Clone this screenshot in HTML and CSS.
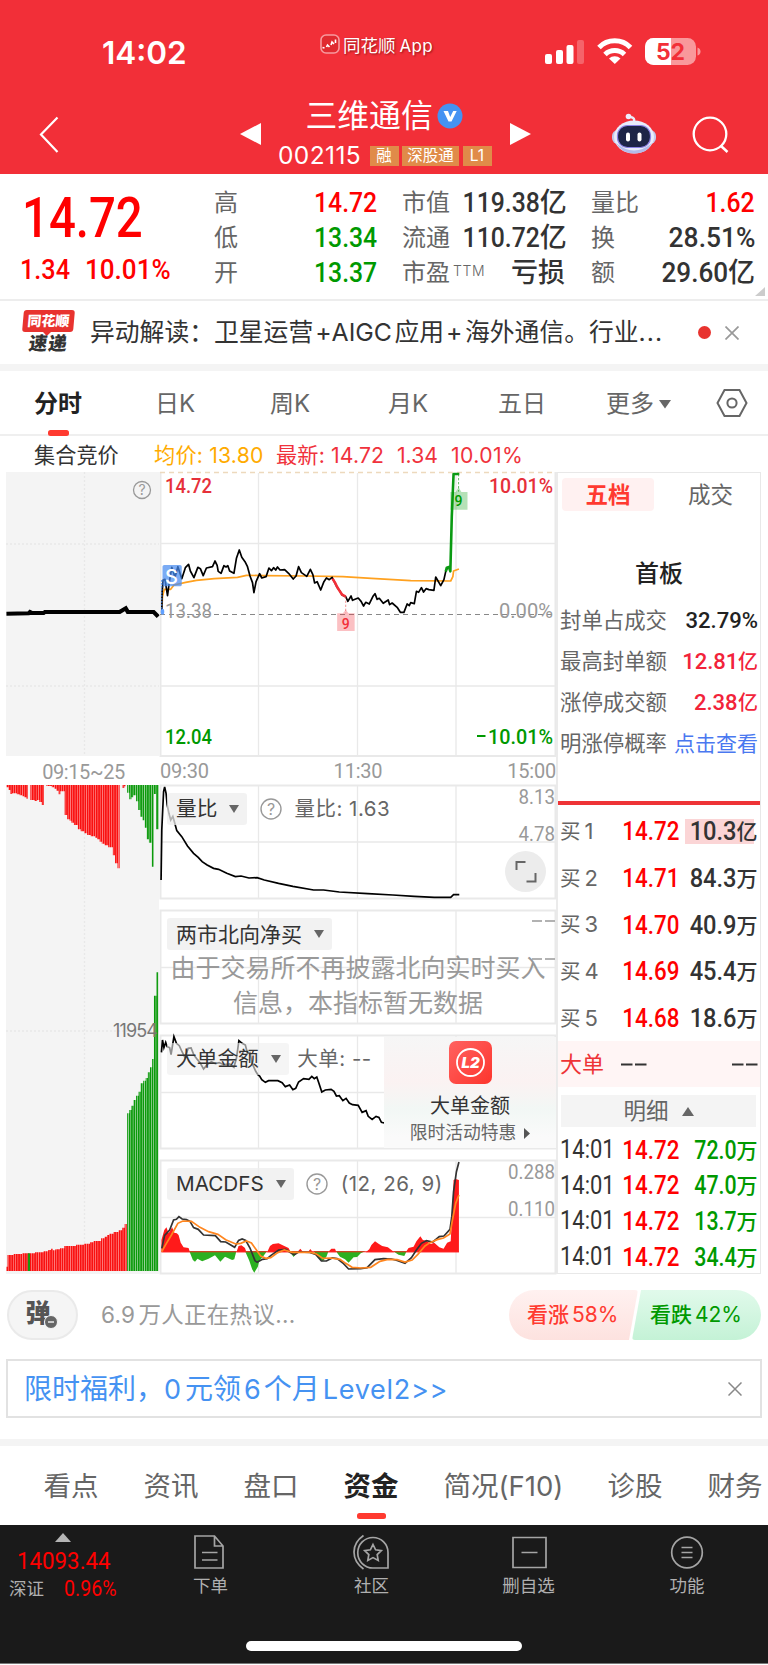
FILE: index.html
```html
<!DOCTYPE html>
<html lang="zh-CN">
<head>
<meta charset="utf-8">
<title>三维通信 002115</title>
<link rel="stylesheet" href="styles.css">
</head>
<body>
<header class="top">
  <div class="status">
    <div class="clock">14:02</div>
    <div class="app-name">
      <svg width="20" height="20" viewBox="0 0 20 20"><rect x="1" y="1" width="18" height="18" rx="5" fill="#e02a30" stroke="#f79a9e" stroke-width="1.600"/><path d="M2.500 13.500l2 .5M6.500 13l1-2 2 2M11 11l1-3 2 2M15.500 9V5.500" fill="none" stroke="#fff" stroke-width="1.600"/></svg>
      <span>同花顺<span class="app-latin">App</span></span>
    </div>
    <svg class="status-icons" width="160" height="30" viewBox="544 37 160 30">
      <g fill="#fff"><rect x="545" y="54" width="7" height="10" rx="2"/><rect x="556" y="50" width="7" height="14" rx="2"/><rect x="566.500" y="45" width="7" height="19" rx="2"/><rect x="577" y="40" width="7" height="24" rx="2" opacity=".25"/></g>
      <g fill="none" stroke="#fff" stroke-width="5"><path d="M599 47.500a22 22 0 0 1 31.500 0"/><path d="M605 54.500a14 14 0 0 1 19.500 0"/></g>
      <path d="M609 58.500a8.500 8.500 0 0 1 11.500 0L614.800 64z" fill="#fff"/>
      <rect x="645" y="38" width="51" height="27" rx="8.500" fill="#f9989b"/>
      <path d="M671 38h-17.500a8.500 8.500 0 0 0-8.500 8.500v10a8.500 8.500 0 0 0 8.500 8.500H671z" fill="#fff"/>
      <path d="M697.500 47.500q3 1 3 4t-3 4z" fill="#f9989b"/>
      <text x="656" y="60" class="batt" textLength="29">52</text>
    </svg>
  </div>
  <div class="nav">
    <svg class="nav-back" width="22" height="38" viewBox="38 116 22 38"><path d="M57.500 117.500L41 134.500l16.500 17.500" fill="none" stroke="#fff" stroke-width="2.200"/></svg>
    <svg class="nav-prev" width="21" height="22" viewBox="0 0 21 22"><path d="M21 0v22L0 11z" fill="#fff"/></svg>
    <div class="stock">
      <div class="stock-name"><span>三维通信</span><svg width="26" height="26" viewBox="0 0 26 26"><circle cx="13" cy="13" r="12.500" fill="#4592f2"/><path d="M6.500 8H11l2.200 6 3-6h3.500L14.500 18.500h-3z" fill="#fff"/></svg></div>
      <div class="stock-code"><span class="code">002115</span><span class="tag">融</span><span class="tag tag-wide">深股通</span><span class="tag">L1</span></div>
    </div>
    <svg class="nav-next" width="21" height="22" viewBox="0 0 21 22"><path d="M0 0v22l21-11z" fill="#fff"/></svg>
    <svg class="nav-bot" width="46" height="42" viewBox="611 113 46 42">
      <path d="M634 122q1-4-3-5" fill="none" stroke="#e9ebf8" stroke-width="2.400"/><circle cx="628.500" cy="116.500" r="2.800" fill="#eef"/>
      <rect x="612" y="130" width="44" height="14" rx="6" fill="#c3c9ed"/>
      <ellipse cx="634" cy="137" rx="20" ry="16.500" fill="#e9ecfb"/><path d="M616 143q18 15 36 0-5 11-18 10.500-13-.5-18-10.500" fill="#b4bbe9"/>
      <rect x="617.500" y="125.500" width="33" height="22" rx="10" fill="#1e2547" stroke="#8c82e6" stroke-width="1.200"/>
      <rect x="626" y="132.500" width="4" height="9" rx="2" fill="#fff"/><rect x="637.500" y="132.500" width="4" height="9" rx="2" fill="#fff"/>
    </svg>
    <svg class="nav-search" width="38" height="38" viewBox="692 116 38 38"><circle cx="710" cy="134" r="16.300" fill="none" stroke="#fff" stroke-width="2.300"/><path d="M720.500 145.500l7 6.500" stroke="#fff" stroke-width="2.500"/></svg>
  </div>
</header>

<section class="quote">
  <div class="last">
    <div class="last-price"><span class="n">14.72</span></div>
    <div class="last-chg"><span class="n">1.34</span><span class="n pct">10.01%</span></div>
  </div>
  <dl class="facts f1">
    <dt>高</dt><dd class="up"><span class="n">14.72</span></dd>
    <dt>低</dt><dd class="down"><span class="n">13.34</span></dd>
    <dt>开</dt><dd class="down"><span class="n">13.37</span></dd>
  </dl>
  <dl class="facts f2">
    <dt>市值</dt><dd><span class="n">119.38</span>亿</dd>
    <dt>流通</dt><dd><span class="n">110.72</span>亿</dd>
    <dt>市盈<sup>TTM</sup></dt><dd>亏损</dd>
  </dl>
  <dl class="facts f3">
    <dt>量比</dt><dd class="up"><span class="n">1.62</span></dd>
    <dt>换</dt><dd><span class="n pct">28.51%</span></dd>
    <dt>额</dt><dd><span class="n amt">29.60</span>亿</dd>
  </dl>
  <svg class="corner" width="10" height="9" viewBox="0 0 10 9"><path d="M10 0v9H0z" fill="#ccc"/></svg>
</section>

<section class="news">
  <div class="news-logo"><span class="logo-a">同花顺</span><span class="logo-b">速递</span></div>
  <div class="news-text">异动解读：卫星运营<i>+AIGC</i>应用<i>+</i>海外通信。行业<b>...</b></div>
  <span class="dot"></span>
  <svg width="14" height="14" viewBox="0 0 14 14"><path d="M.5.500l13 13M13.500.500l-13 13" stroke="#999" stroke-width="1.700"/></svg>
</section>

<nav class="periods">
  <span class="p-on">分时</span><span>日K</span><span>周K</span><span>月K</span><span>五日</span>
  <span class="more">更多<svg width="12" height="9" viewBox="0 0 12 9"><path d="M0 0h12L6 8.500z" fill="#666"/></svg></span>
  <svg class="gear" width="32" height="30" viewBox="0 0 32 30"><path d="M8.500 2h15L30.500 15l-7 13h-15L1.500 15z" fill="none" stroke="#666" stroke-width="2"/><circle cx="16" cy="15" r="4.600" fill="none" stroke="#666" stroke-width="2"/></svg>
</nav>

<div class="legend"><span class="l1">集合竞价</span><span class="l2">均价: 13.80</span><span class="l3">最新: 14.72</span><span class="l4">1.34</span><span class="l5">10.01%</span></div>

<main class="board">
  <div class="auction">
    <svg class="blk" width="154" height="285" viewBox="6 472 154 285">
      <rect x="6" y="472" width="153" height="284" fill="#f4f4f4"/>
      <path d="M84.500 472v284M6 544h153M6 686h153" stroke="#e8e8e8" stroke-width="1.300" stroke-dasharray="2 2"/>
      <g transform="translate(0 470) scale(.35714 .33333)"><path d="M18 431L80 430 84 426 90 429H122L126 426H335L352 415 358 426H430L443 440" fill="none" stroke="#000" stroke-width="12"/></g>
      <circle cx="142" cy="490" r="8.500" fill="none" stroke="#999" stroke-width="1.300"/><text x="142" y="495" class="q">?</text>
    </svg>
    <div class="auction-time">09:15~25</div>
    <svg class="blk" width="154" height="489" viewBox="6 785 154 489">
      <defs>
        <pattern id="r" width="6.400" height="10" patternUnits="userSpaceOnUse"><rect width="6.400" height="10" fill="#f99"/><rect width="4.700" height="10" fill="#f91010"/></pattern>
        <pattern id="g" width="6.400" height="10" patternUnits="userSpaceOnUse" x="2.500"><rect width="6.400" height="10" fill="#aed8ae"/><rect width="4.500" height="10" fill="#0a9a0a"/></pattern>
      </defs>
      <rect x="6" y="785" width="153" height="489" fill="#f4f4f4"/>
      <path d="M84.500 785v488M6 1031h153" stroke="#e8e8e8" stroke-width="1.300" stroke-dasharray="2 2"/>
      <g transform="translate(0 770) scale(.35714 .33333)">
        <path fill="url(#r)" d="M18 45V52H24V60H29V72H34V70H47V73H55V76H62V79H68V82H74V86H78V45zM85 45V90H97V93H104V90H110V96H117V105H123V45zM130 45V48H145V52H152V56H158V62H164V73H169V64H181V135H188V148H195V152H200V158H207V165H218V178H226V184H236V190H244V195H254V199H266V203H272V208H279V215H285V221H293V226H303V232H316V256H322V280H329V295H335V45zM343 45V54H348V49H352V45z"/>
        <path fill="url(#g)" d="M356 45V68H362V88H368V82H373V76H381V94H387V120H393V140H399V151H405V173H411V208H417V218H425V290H431V72H437V178H444V45z"/>
      </g>
      <g transform="translate(0 1020) scale(.35714 .33333)">
        <path fill="url(#r)" d="M17 753V740H21V705H38V702H62V700H98V697H122V694H135V690H143V686H148V691H155V688H168V685H180V678H213V674H235V671H252V667H262V663H283V655H293V650H300V645H306V641H318V636H332V631H342V623H349V612H355V753z"/>
        <rect x="78" y="700" width="6" height="53" fill="#1a9a10"/>
        <path fill="url(#g)" d="M356 753V280H362V270H368V257H374V240H381V227H388V215H394V190H401V182H408V174H414V157H420V142H426V117H431V-73H438V-143H443V753z"/>
      </g>
      <text x="113" y="1037" class="vol" textLength="45">11954</text>
    </svg>
  </div>

  <div class="plots">
    <svg class="blk" width="398" height="286" viewBox="160 471 398 286">
      <g class="grid"><path d="M258.500 473v283M357.500 473v283M456 473v283M160 543.500h396M160 686h396"/><path class="edge" d="M160.500 472v284H555.500V472"/></g>
      <path d="M160 472.500h396" stroke="#edd9bd" stroke-width="1.600" stroke-dasharray="5 4"/>
      <path d="M160 614.500h396" stroke="#888" stroke-width="1.100" stroke-dasharray="5 4"/>
      <text x="165" y="493" class="ax up2" textLength="47" lengthAdjust="spacingAndGlyphs">14.72</text>
      <text x="489" y="493" class="ax up2" textLength="64" lengthAdjust="spacingAndGlyphs">10.01%</text>
      <text x="165" y="618" class="ax mute" textLength="47" lengthAdjust="spacingAndGlyphs">13.38</text>
      <text x="499" y="618" class="ax mute" textLength="54" lengthAdjust="spacingAndGlyphs">0.00%</text>
      <text x="165" y="743.500" class="ax down" textLength="47" lengthAdjust="spacingAndGlyphs">12.04</text>
      <path d="M477 736h8.500" stroke="#090" stroke-width="2"/>
      <text x="488" y="743.500" class="ax down" textLength="65" lengthAdjust="spacingAndGlyphs">10.01%</text>
      <g transform="translate(0 470) scale(.35714 .33333)" fill="none" stroke-linejoin="round">
        <path class="ln" stroke="#ffa11f" d="M453 425L455 380 460 358 478 358 487 345 520 337 550 331 600 326 665 322 690 316 740 317 860 318 960 320 1040 325 1150 332 1262 333 1268 320 1270 303 1285 297"/>
        <path class="ln" stroke="#000" d="M453 430L454 365 457 330 462 328 469 377 475 330 481 292 490 322 498 290 509 326 519 293 528 283 533 303 543 323 554 292 561 296 569 317 578 294 595 290 602 273 608 286 611 304 619 310 627 287 633 291 638 287 643 303 655 310 662 265 670 240 677 262 686 275 693 290 700 318 707 338 711 368 717 335 727 311 733 324 745 320 753 294 760 302 766 293 772 300 777 291 784 300 797 299 808 310 821 327 829 318 836 290 844 308 859 319 869 298 876 314 881 339 888 335 898 360 907 335 914 324 922 329 930 322 937 337 944 352 951 362 958 375 968 380 974 394 983 378 987 391 1003 384 1011 394 1018 408 1024 397 1034 402 1045 378 1050 371 1056 388 1062 385 1073 400 1087 390 1091 404 1098 399 1112 412 1121 427 1131 427 1140 402 1146 407 1150 398 1160 401 1166 364 1172 367 1180 353 1186 366 1193 356 1201 359 1215 361 1220 321 1234 347 1243 329 1248 305 1253 292"/>
        <path class="ln2" stroke="#f22f38" d="M931 326L938 338 944 351 950 361 958 374 968 380"/>
        <path class="ln2" stroke="#0a9a12" d="M1248 305L1251 293 1257 291 1261 304 1265 140 1270 12 1286 12"/>
        <path d="M968 380V430" stroke="#e66" stroke-width="2" stroke-dasharray="7 5"/><path d="M1284 12V65" stroke="#299a29" stroke-width="2" stroke-dasharray="7 5"/>
        <path fill="#f22f38" fill-opacity=".3" d="M947 430H960L968 419 976 430H993V483H944V430z"/>
        <path fill="#0a9a12" fill-opacity=".3" d="M1261 66H1276L1284 52 1292 66H1309V119H1261z"/>
        <rect x="455" y="285" width="54" height="64" rx="5" fill="#468bf0" fill-opacity=".72"/>
        <path d="M453 330V425" stroke="#468bf0" stroke-width="3" stroke-dasharray="5 4"/><ellipse cx="455" cy="425" rx="5" ry="9" fill="#60a0ff"/>
      </g>
      <text x="171.500" y="583.500" class="s-mark">S</text>
      <text x="345.700" y="628.500" class="nine" fill="#f22f38">9</text><text x="458.500" y="506" class="nine" fill="#090">9</text>
    </svg>
    <div class="times"><span>09:30</span><span>11:30</span><span>15:00</span></div>

    <div class="panel">
      <svg class="blk" width="398" height="115" viewBox="160 785 398 115">
        <g class="grid"><path d="M258.500 786v113M357.500 786v113M456 786v113M160 842h396"/><path class="edge" d="M160.500 785.500H555.500V898.500H160.500z"/></g>
        <g transform="translate(0 770) scale(.35714 .33333)"><path class="ln" fill="none" stroke="#000" d="M451 330L453 180 458 65 461 51 465 70 468 104 473 130 478 150 484 139 489 158 495 182 509 200 525 228 542 250 555 262 566 275 580 285 598 295 612 298 635 310 659 320 675 318 697 324 720 323 740 330 780 340 820 349 878 360 906 360 950 366 1030 371 1100 375 1160 379 1216 382H1262L1270 374H1286"/></g>
        <text x="518.500" y="803.500" class="ax mute" textLength="36.500" lengthAdjust="spacingAndGlyphs">8.13</text>
        <text x="518.500" y="840.500" class="ax mute" textLength="36.500" lengthAdjust="spacingAndGlyphs">4.78</text>
        <circle cx="525.500" cy="871.500" r="20.500" fill="#ececec"/><path d="M516.500 870v-8h9M526.500 881.500h9v-8.500" fill="none" stroke="#666" stroke-width="2"/>
      </svg>
      <div class="over"><span class="chip">量比<i class="tri"></i></span><svg class="help" width="22" height="22" viewBox="0 0 22 22"><circle cx="11" cy="11" r="10" fill="none" stroke="#999" stroke-width="1.400"/><text x="11" y="17" class="q big">?</text></svg><span class="reading val">量比: 1.63</span></div>
    </div>

    <div class="panel">
      <svg class="blk" width="398" height="115" viewBox="160 910 398 115">
        <g class="grid"><path d="M258.500 911v113M357.500 911v113M456 911v113M160 967.500h396"/><path class="edge" d="M160.500 910.500H555.500V1023.500H160.500z"/></g>
        <path d="M532 921h10M545 921h10M532 959h10M545 959h10" stroke="#999" stroke-width="1.700"/>
      </svg>
      <div class="over"><span class="chip wide">两市北向净买<i class="tri"></i></span></div>
      <p class="notice">由于交易所不再披露北向实时买入<br>信息，本指标暂无数据</p>
    </div>

    <div class="panel">
      <svg class="blk" width="398" height="115" viewBox="160 1035 398 115">
        <g class="grid"><path d="M258.500 1036v113M357.500 1036v113M456 1036v113M160 1092.500h396"/><path class="edge" d="M160.500 1035.500H555.500V1148.500H160.500z"/></g>
        <g transform="translate(0 1020) scale(.35714 .33333)"><path class="ln" fill="none" stroke="#000" d="M452 97L455 60 459 83 464 67 468 80 475 83 479 104 487 50 494 70 502 77 510 96 518 113 527 85 535 84 543 105 553 119 560 128 570 147 580 134 592 125 603 131 614 128 627 134 643 132 655 142 662 115 669 62 678 70 687 75 693 100 700 98 706 130 716 154 722 164 727 168 733 179 743 187 752 182H778L790 188 799 200 811 195 820 209 828 205 836 186 850 176 865 178 873 169 880 176 887 171 893 190 901 216 911 210 927 208 935 214 942 228 950 227 960 242 969 235 978 249 987 254 1003 256 1014 277 1025 272 1031 289 1042 298 1053 289 1061 292 1068 307 1076 309"/></g>
      </svg>
      <div class="over"><span class="chip see">大单金额<i class="tri"></i></span><span class="reading tight">大单: --</span></div>
      <div class="promo">
        <svg width="43" height="43" viewBox="0 0 43 43"><defs><linearGradient id="pg" x2="1" y2="1"><stop stop-color="#ff6260"/><stop offset="1" stop-color="#fd352d"/></linearGradient></defs><rect width="43" height="43" rx="7" fill="url(#pg)"/><circle cx="21.500" cy="21.500" r="13.500" fill="none" stroke="#fff" stroke-width="1.800"/><text x="21.500" y="27" class="l2t">L2</text></svg>
        <div class="promo-t">大单金额</div>
        <div class="promo-s">限时活动特惠<svg width="6" height="11" viewBox="0 0 6 11"><path d="M0 0l6 5.500L0 11z" fill="#555"/></svg></div>
      </div>
    </div>

    <div class="panel last-panel">
      <svg class="blk" width="398" height="114" viewBox="160 1160 398 114">
        <g class="grid"><path d="M258.500 1161v113M357.500 1161v113M456 1161v113M160 1217.500h396"/><path class="edge" d="M160.500 1160.500H555.500V1273.500H160.500z"/></g>
        <text x="508" y="1178.500" class="ax mute" textLength="47" lengthAdjust="spacingAndGlyphs">0.288</text>
        <text x="508" y="1216" class="ax mute" textLength="47" lengthAdjust="spacingAndGlyphs">0.110</text>
        <g transform="translate(0 1020) scale(.35714 .33333)">
          <path fill="#ff1a1a" d="M452 697V660L460 630 466 622 472 640 482 622 488 638 495 640 500 645 506 668 514 682 528 684 532 697zM662 697L668 678 676 676 686 684 690 697zM748 697L756 678 764 672 780 670 796 678 808 684 814 697zM832 697L841 686 849 697zM862 697L869 687 876 697zM918 697L928 686 938 686 942 697zM1024 697L1034 688 1040 675 1050 664 1060 671 1070 678 1086 682 1104 697zM1136 697L1144 684 1158 680 1166 664 1177 649 1184 660 1194 662 1206 672 1216 668 1230 682 1242 686 1252 668 1262 664 1267 560 1270 480 1276 477 1285 480V697z"/>
          <path fill="#2bb020" d="M530 693L540 720 546 725 553 716 566 724 584 716 602 706 617 725 630 710 650 720 656 718 662 693zM686 693L698 722 706 748 712 758 722 740 726 722 735 712 748 693zM810 693L822 711 834 693zM878 693L890 712 904 724 914 710 920 693zM940 693L952 710 966 718 976 728 990 712 1000 711 1010 700 1024 693zM1100 693L1116 704 1132 708 1139 693z"/>
          <path d="M452 695H1285" stroke="#f22" stroke-width="3"/>
          <path class="ln" fill="none" stroke="#333" d="M453 685L461 646 475 630 486 600 494 598 501 590 510 597 522 599 532 604 542 623 555 628 570 645 603 647 618 665 632 666 657 682 668 661 678 657 688 661 700 684 714 722 720 727 735 718 748 716 758 707 780 690 800 688 814 698 824 704 836 696 868 697 884 703 900 723 914 723 930 714 944 716 960 729 976 747 1010 746 1028 743 1050 719 1074 716 1096 717 1112 721 1134 730 1152 713 1166 690 1180 670 1194 662 1212 666 1230 650 1243 648 1260 628 1265 590 1270 515 1278 455 1285 426"/>
          <path class="ln" fill="none" stroke="#ff861f" d="M453 695L466 670 480 645 498 610 512 603 536 604 560 622 584 635 610 643 632 659 660 672 674 670 690 663 704 669 716 687 730 708 744 715 758 713 776 699 796 690 818 697 870 697 886 702 904 715 926 714 952 718 968 730 986 742 1012 744 1038 742 1064 724 1086 718 1112 719 1134 726 1154 720 1170 703 1190 678 1204 668 1224 659 1242 654 1260 642 1266 605 1276 550 1285 525"/>
        </g>
      </svg>
      <div class="over"><span class="chip">MACDFS<i class="tri"></i></span><svg class="help" width="22" height="22" viewBox="0 0 22 22"><circle cx="11" cy="11" r="10" fill="none" stroke="#999" stroke-width="1.400"/><text x="11" y="17" class="q big">?</text></svg><span class="reading params">(12, 26, 9)</span></div>
    </div>
  </div>

  <aside class="book">
    <div class="book-tabs"><span class="bt-on">五档</span><span>成交</span></div>
    <h2>首板</h2>
    <div class="kv"><span>封单占成交</span><b><span class="n">32.79%</span></b></div>
    <div class="kv"><span>最高封单额</span><b class="rd"><span class="n">12.81</span>亿</b></div>
    <div class="kv"><span>涨停成交额</span><b class="rd"><span class="n">2.38</span>亿</b></div>
    <div class="kv"><span>明涨停概率</span><a>点击查看</a></div>
    <div class="rule"></div>
    <div class="bid"><span>买<i>1</i></span><b class="up"><span class="n">14.72</span></b><b class="hl"><span class="n">10.3</span>亿</b></div>
    <div class="bid"><span>买<i>2</i></span><b class="up"><span class="n">14.71</span></b><b><span class="n">84.3</span>万</b></div>
    <div class="bid"><span>买<i>3</i></span><b class="up"><span class="n">14.70</span></b><b><span class="n">40.9</span>万</b></div>
    <div class="bid"><span>买<i>4</i></span><b class="up"><span class="n">14.69</span></b><b><span class="n">45.4</span>万</b></div>
    <div class="bid"><span>买<i>5</i></span><b class="up"><span class="n">14.68</span></b><b><span class="n">18.6</span>万</b></div>
    <div class="big-order"><span>大单</span><svg width="26" height="3" viewBox="0 0 26 3"><path d="M0 1.500h11.500M14 1.500h11.500" stroke="#333" stroke-width="2"/></svg><svg width="26" height="3" viewBox="0 0 26 3"><path d="M0 1.500h11.500M14 1.500h11.500" stroke="#333" stroke-width="2"/></svg></div>
    <div class="detail">明细<svg width="12" height="9" viewBox="0 0 12 9"><path d="M0 9h12L6 0z" fill="#666"/></svg></div>
    <div class="tick"><span class="n">14:01</span><b class="up"><span class="n">14.72</span></b><b class="down"><span class="n">72.0</span>万</b></div>
    <div class="tick"><span class="n">14:01</span><b class="up"><span class="n">14.72</span></b><b class="down"><span class="n">47.0</span>万</b></div>
    <div class="tick"><span class="n">14:01</span><b class="up"><span class="n">14.72</span></b><b class="down"><span class="n">13.7</span>万</b></div>
    <div class="tick"><span class="n">14:01</span><b class="up"><span class="n">14.72</span></b><b class="down"><span class="n">34.4</span>万</b></div>
  </aside>
</main>

<section class="talk">
  <div class="danmu"><span>弹</span><svg width="14" height="14" viewBox="0 0 14 14"><circle cx="7" cy="7" r="6.500" fill="#666" stroke="#f5f5f5"/><path d="M4 7h6" stroke="#fff" stroke-width="1.300"/></svg></div>
  <div class="talk-text"><i>6.9</i>万人正在热议...</div>
  <div class="vote"><span class="bull">看涨<i>58%</i></span><span class="bear">看跌<i>42%</i></span></div>
</section>

<section class="promo-bar"><span>限时福利，<i class="zero">0</i>元领<i>6</i>个月<i class="lv">Level2&gt;&gt;</i></span><svg width="14" height="14" viewBox="0 0 14 14"><path d="M.5.500l13 13M13.500.500l-13 13" stroke="#888" stroke-width="1.500"/></svg></section>

<nav class="sections"><span>看点</span><span>资讯</span><span>盘口</span><span class="s-on">资金</span><span>简况<i>(F10)</i></span><span>诊股</span><span>财务</span></nav>

<footer class="bar">
  <div class="index">
    <svg width="16" height="9" viewBox="0 0 16 9"><path d="M0 9h16L8 0z" fill="#b5b5b5"/></svg>
    <div class="ix-v"><span class="n">14093.44</span></div>
    <div class="ix-r"><span>深证</span><span class="n">0.96%</span></div>
  </div>
  <div class="act a1"><svg width="36" height="36" viewBox="0 0 36 36"><path d="M2 2h19.500L30 12v22H2zM21.500 2v10H30M9 18.500h15.500M9 26h15.500"/></svg><span>下单</span></div>
  <div class="act a2"><svg width="38" height="36" viewBox="0 0 38 36"><path d="M20 3.500A15 15 0 0 0 20 34h15V18.500A15 15 0 0 0 20 3.500zM10.500 1.500Q1 8 1 18t9.500 17"/><path d="M20 10.500l2.600 5.300 5.700.8-4.100 4 1 5.800-5.200-2.800-5.200 2.800 1-5.800-4.100-4 5.700-.8z"/></svg><span>社区</span></div>
  <div class="act a3"><svg width="36" height="36" viewBox="0 0 36 36"><path d="M2 3.500h33v30h-33zM10.500 18.500h16"/></svg><span>删自选</span></div>
  <div class="act a4"><svg width="34" height="36" viewBox="0 0 34 36"><circle cx="17" cy="18.500" r="15.300"/><path d="M11.500 13.500h11M11.500 18.500h11M11.500 23.500h11"/></svg><span>功能</span></div>
  <div class="home"></div>
</footer>
</body>
</html>
```
FILE: styles.css
```css
* { box-sizing: border-box; }
html, body { margin: 0; padding: 0; }
body { width: 768px; height: 1665px; overflow: hidden; background: #fff; color: #333; font-family: Inter, "Noto Sans CJK SC", sans-serif; line-height: 1; }
i { font-style: normal; }
b { font-weight: 500; }
svg { display: block; flex: none; }
.blk { overflow: visible; }
span, div, dt, dd { white-space: nowrap; }
.n { display: inline-block; font-family: Roboto, sans-serif; font-weight: 500; transform: scaleX(.86); transform-origin: 100% 50%; }
.up { color: #f00; }
.down { color: #090; fill: #090; }

.top { height: 174px; background: #f22f38; color: #fff; display: flex; flex-direction: column; }
.status { height: 96px; display: grid; grid-template-columns: 102px 218px 224px 1fr; }
.clock { grid-column: 2; padding-top: 37px; font-size: 31.500px; line-height: 32px; font-weight: 600; }
.app-name { display: flex; gap: 3px; padding-top: 33px; height: 55px; align-items: center; font-size: 17.500px; text-shadow: 1px 1px 2px rgba(90,0,0,.6); }
.app-name > span { padding-top: 3px; }
.app-latin { margin-left: 4px; font-size: 17px; letter-spacing: .3px; }
.status-icons { margin-top: 37px; }
.batt { font: 700 23px Inter, sans-serif; fill: #f22f38; }
.nav { height: 78px; display: flex; align-items: flex-start; }
.nav-back { margin: 20px 0 0 38px; }
.nav-prev { margin: 27px 0 0 180px; }
.stock { width: 249px; padding-left: 17px; }
.stock-name { height: 40px; display: flex; align-items: center; gap: 4px; padding-left: 27.500px; font-size: 31.800px; }
.stock-code { display: flex; gap: 3.500px; align-items: center; height: 20px; margin-top: 10px; }
.code { font-size: 24.500px; width: 88px; font-weight: 400; letter-spacing: .4px; margin-top: -1px; }
.tag { width: 29px; height: 20px; background: #e08b49; font-size: 15.500px; line-height: 19px; text-align: center; }
.tag-wide { width: 57px; }
.nav-next { margin-top: 27px; }
.nav-bot { margin: 17px 0 0 80px; }
.nav-search { margin: 20px 0 0 35px; }

.quote { height: 127px; border-bottom: 2px solid #ededed; display: flex; position: relative; padding-top: 11px; }
.last { width: 214px; padding-left: 22px; color: #f00; }
.last-price { height: 65px; line-height: 65px; font-size: 55px; }
.last-price .n, .last-chg .n { transform-origin: 0 50%; }
.last-chg { font-size: 28px; line-height: 39px; display: flex; margin-left: -2px; }
.last-chg .n { width: 65px; transform: scaleX(.9); }
.last-chg .pct { transform: scaleX(.93); }
.facts { margin: 0; display: grid; grid-template-rows: 35px 35px 35px; line-height: 35px; font-size: 24px; color: #666; }
.facts dd { margin: 0; text-align: right; color: #333; font-size: 27px; font-weight: 500; }
.facts .n { transform: scaleX(.9); font-size: 27.500px; }
.facts .pct { transform: scaleX(.96); }
.facts .amt { transform: scaleX(.95); }
.facts dd.up { color: #f00; }
.facts dd.down { color: #090; }
.f1 { width: 163px; grid-template-columns: 50px 1fr; }
.f2 { width: 162px; margin-left: 25px; grid-template-columns: 52px 111px; }
.f3 { width: 164px; margin-left: 27px; grid-template-columns: 50px 1fr; }
.facts sup { font-size: 14px; vertical-align: 5px; line-height: 1; margin-left: 3px; letter-spacing: .6px; font-weight: 300; }
.corner { position: absolute; right: 3px; bottom: 3px; }

.news { height: 70px; border-bottom: 7px solid #f4f4f4; display: flex; align-items: center; padding-left: 22px; }
.news-logo { width: 53px; height: 44px; display: flex; flex-direction: column; align-items: center; margin-top: -2px; }
.logo-a { position: relative; width: 51px; height: 23px; border-radius: 3px; background: #e8332f; color: #fff; font-size: 14px; font-weight: 900; line-height: 22px; text-align: center; transform: skewX(-5deg); }
.logo-a::after { content: ""; position: absolute; left: 21px; top: 22px; border: 4px solid transparent; border-top-color: #e8332f; border-bottom: 0; }
.logo-b { font-size: 18.500px; font-weight: 900; line-height: 23px; transform: skewX(-8deg); letter-spacing: 1px; }
.news-text { margin-left: 15px; width: 608px; font-size: 24.800px; }
.news-text i { margin: 0 2.500px 0 2px; }
.news-text b { letter-spacing: 1px; font-weight: 400; }
.dot { width: 13px; height: 13px; border-radius: 50%; background: #e8332f; margin-right: 14px; }

.periods { height: 65px; border-bottom: 2px solid #efefef; display: grid; grid-template-columns: 121px 115px 118px 110px 108px 110px 1fr; padding-left: 34px; line-height: 66px; font-size: 24px; color: #666; }
.p-on { color: #222; font-weight: 700; position: relative; }
.p-on::after { content: ""; position: absolute; left: 14px; top: 59px; width: 21px; height: 6px; border-radius: 2.500px; background: #ff3a30; }
.more { display: flex; align-items: center; gap: 5px; }
.gear { margin-top: 17px; }

.legend { height: 35px; display: grid; grid-template-columns: 120px 122px 121px 54px 1fr; padding-left: 34px; font-size: 21.200px; line-height: 39px; color: #f0323c; }
.l1 { color: #333; }
.l2 { color: #ffab00; letter-spacing: .2px; }
.l3 { letter-spacing: .15px; }
.l5 { letter-spacing: .4px; }

.board { height: 803px; display: grid; grid-template-columns: 154px 398px 202px; padding-left: 6px; }
.auction, .plots { display: flex; flex-direction: column; }
.auction { padding-top: 1px; }
.auction-time { height: 28px; padding-left: 1px; text-align: center; font: 20px/30px Roboto, sans-serif; letter-spacing: -.4px; color: #999; }
.q { font: 14px Inter, sans-serif; fill: #999; text-anchor: middle; }
.q.big { font-size: 16px; }
.vol { font: 18px Inter, sans-serif; fill: #777; }
.grid path { fill: none; stroke: #e9e9e9; stroke-width: 1.300; }
.grid .edge { stroke-width: 2; }
.ax { font: 500 21px Roboto, sans-serif; }
.up2 { fill: #e6303a; }
.mute { fill: #999; font-weight: 400; }
.ln { vector-effect: non-scaling-stroke; stroke-width: 1.700; }
.ln2 { vector-effect: non-scaling-stroke; stroke-width: 2.600; }
.s-mark { font: 500 20px Inter, sans-serif; fill: #fff; text-anchor: middle; }
.nine { font: 500 14px Roboto, sans-serif; text-anchor: middle; }
.times { height: 28px; display: flex; justify-content: space-between; padding: 0 2px 0 0; font: 20px/28px Roboto, sans-serif; letter-spacing: -.2px; color: #999; }
.panel { position: relative; height: 125px; }
.last-panel { height: 114px; }
.over { position: absolute; left: 7px; top: 8px; height: 32px; display: flex; align-items: center; color: #666; font-size: 20.500px; }
.chip { height: 32px; padding: 0 8px 0 9px; border-radius: 3px; background: rgba(238,238,238,.75); color: #333; display: flex; align-items: center; font-size: 20.700px; }
.chip.wide { font-size: 21px; }
.chip.see { background: rgba(238,238,238,.6); }
.tri { border: 5.500px solid transparent; border-top: 8px solid #666; border-bottom: 0; margin-left: 12px; }
.help { margin: 0 12.500px; }
.reading.tight { margin-left: 8.500px; letter-spacing: .5px; }
.reading.val { letter-spacing: .5px; }
.params { letter-spacing: .5px; }
.notice { position: absolute; left: 0; top: 41px; width: 396px; margin: 0; text-align: center; font-size: 25px; line-height: 35px; color: #999; }
.promo { position: absolute; left: 224px; top: 2px; width: 172px; height: 111px; background: linear-gradient(#f6f6f6 0, #fbf2f2 40%, #f2f7f5 65%, #fafafa 90%); display: flex; flex-direction: column; align-items: center; padding-top: 4px; }
.l2t { font: italic 900 15px Inter, sans-serif; fill: #fff; text-anchor: middle; }
.promo-t { font-size: 20px; line-height: 26px; margin-top: 9px; color: #333; }
.promo-s { display: flex; gap: 8px; align-items: center; font-size: 17.800px; line-height: 26px; margin-top: 1px; color: #666; }

.book { border: 1px solid #e8e8e8; border-left: 2px solid #ebebeb; margin: 1px 0 0 -2px; height: 802px; width: 205px; display: flex; flex-direction: column; }
.book-tabs { display: grid; grid-template-columns: 92px 1fr; margin: 5px 3px 0 4px; line-height: 33px; height: 33px; flex: none; font-size: 22.500px; text-align: center; color: #666; }
.bt-on { background: #fff1f1; color: #ff3a30; font-weight: 700; border-radius: 4px; }
.book-tabs span + span { padding-left: 10px; }
.book h2 { margin: 47px 0 10px; text-align: center; font-size: 24px; line-height: 32px; font-weight: 500; color: #222; }
.kv { height: 41px; flex: none; display: flex; justify-content: space-between; align-items: center; padding: 0 2px; font-size: 21.400px; color: #666; }
.kv b { color: #222; font-size: 20px; }
.kv .n { font-size: 22.500px; transform: scaleX(.98); }
.kv b.rd { color: #f2233a; }
.kv a { color: #4a78f0; font-size: 21px; }
.rule { height: 4px; flex: none; background: #ee3336; margin-top: 36.500px; margin-bottom: 3.500px; }
.bid { height: 46.700px; flex: none; display: grid; grid-template-columns: 53px 60px 1fr; align-items: center; padding: 0 2.500px 0 2px; font-size: 20.500px; color: #666; }
.bid span i { margin-left: 4px; font-size: 22px; }
.bid b, .tick b { text-align: right; color: #333; font-size: 21px; }
.bid b.up, .tick b.up { color: #f00; }
.tick b.down { color: #090; }
.bid .n, .tick .n { font-size: 26px; line-height: 1; vertical-align: -1px; }
.bid b:last-child .n { transform: scaleX(.91); }
.tick b:last-child .n { transform: scaleX(.82); }
.bid b.hl { background: linear-gradient(#fbd5d6, #fbd5d6) 12px 50% / 69px 25px no-repeat; }
.big-order { height: 46px; flex: none; background: #fff5f5; display: grid; grid-template-columns: 61px 1fr 26px; align-items: center; padding: 0 2.500px 0 2px; font-size: 22px; color: #ee3336; }
.detail { height: 32px; flex: none; margin: 8px 4px 4.500px 3px; background: #f4f4f4; display: flex; align-items: center; justify-content: center; gap: 13px; font-size: 22.500px; color: #666; }
.tick { height: 35.700px; flex: none; display: grid; grid-template-columns: 53px 60px 1fr; align-items: center; padding: 0 2.500px 0 2px; }
.tick > .n { transform-origin: 0 50%; font-weight: 450; font-size: 25.500px; }

.talk { height: 82px; display: flex; align-items: center; padding: 0 7px; }
.danmu { width: 71px; height: 50px; border-radius: 25px; border: 2px solid #eaeaea; background: #f5f5f5; display: flex; align-items: center; justify-content: center; font-size: 25px; font-weight: 900; color: #555; }
.danmu > span { margin: -3px 0 0 -2px; }
.danmu svg { margin: 14px 0 0 -7px; }
.talk-text { margin-left: 23px; width: 408px; font-size: 22.500px; color: #999; letter-spacing: .3px; }
.talk-text i { margin-right: 3px; }
.vote { display: flex; width: 252px; font-size: 21px; line-height: 50px; font-weight: 500; }
.vote i { margin-left: 3px; font-size: 21px; font-weight: 400; }
.bull { width: 129px; padding-left: 18px; color: #ff3a30; background: linear-gradient(#fff1f0, #fde2df); border-radius: 25px 3px 3px 25px; clip-path: polygon(0 0, 100% 0, 93% 100%, 0 100%); }
.bear { width: 129px; margin-left: -6px; padding-left: 18px; color: #090; background: linear-gradient(#e1faeb, #c4f2d6); border-radius: 3px 25px 25px 3px; clip-path: polygon(7% 0, 100% 0, 100% 100%, 0 100%); }

.promo-bar { margin: 3px 6px 0; height: 59px; border: 2px solid #e2e2e2; display: flex; align-items: center; justify-content: space-between; padding: 0 18px 0 16px; font-size: 28px; color: #4592f2; }
.promo-bar i { margin: 0 3px; font-size: 27px; }
.promo-bar .zero { margin: 0 4px 0 0; }
.promo-bar .lv { letter-spacing: .7px; }

.sections { margin-top: 21px; border-top: 7px solid #f4f4f4; height: 86px; display: grid; grid-template-columns: 100px 100px 100px 100px 164px 100px 60px; padding-left: 43.500px; font-size: 27.500px; line-height: 81px; color: #666; }
.s-on { color: #222; font-weight: 700; position: relative; }
.s-on::after { content: ""; position: absolute; left: 13px; top: 67px; width: 29px; height: 6px; border-radius: 2.500px; background: #ff3a30; }

.bar { height: 139px; background: #1a1a1a; display: grid; grid-template-columns: 128px 165px 157px 157px 160px; grid-template-rows: 115px 24px; border-bottom: 1px solid #777; color: #b0b0b0; }
.index { padding-top: 8px; display: flex; flex-direction: column; color: #f00; }
.index > svg { margin-left: 55px; }
.ix-v { margin: 6px 0 0 17px; font-size: 24.500px; line-height: 25px; }
.index .n { transform: scaleX(.91); transform-origin: 0 50%; font-weight: 450; }
.ix-r { display: flex; gap: 20px; padding-left: 9px; font-size: 22px; line-height: 31px; }
.ix-r .n { transform: scaleX(.89); }
.ix-r span:first-child { font-size: 17.500px; color: #b0b0b0; }
.act { display: flex; flex-direction: column; align-items: center; padding-top: 9px; font-size: 17.500px; line-height: 26px; }
.act svg { fill: none; stroke: #a5a5a5; stroke-width: 1.700; margin-bottom: 3px; }
.home { grid-column: 1 / -1; width: 276px; height: 10px; border-radius: 5px; background: #fff; margin: 1px 0 0 246px; }
```
